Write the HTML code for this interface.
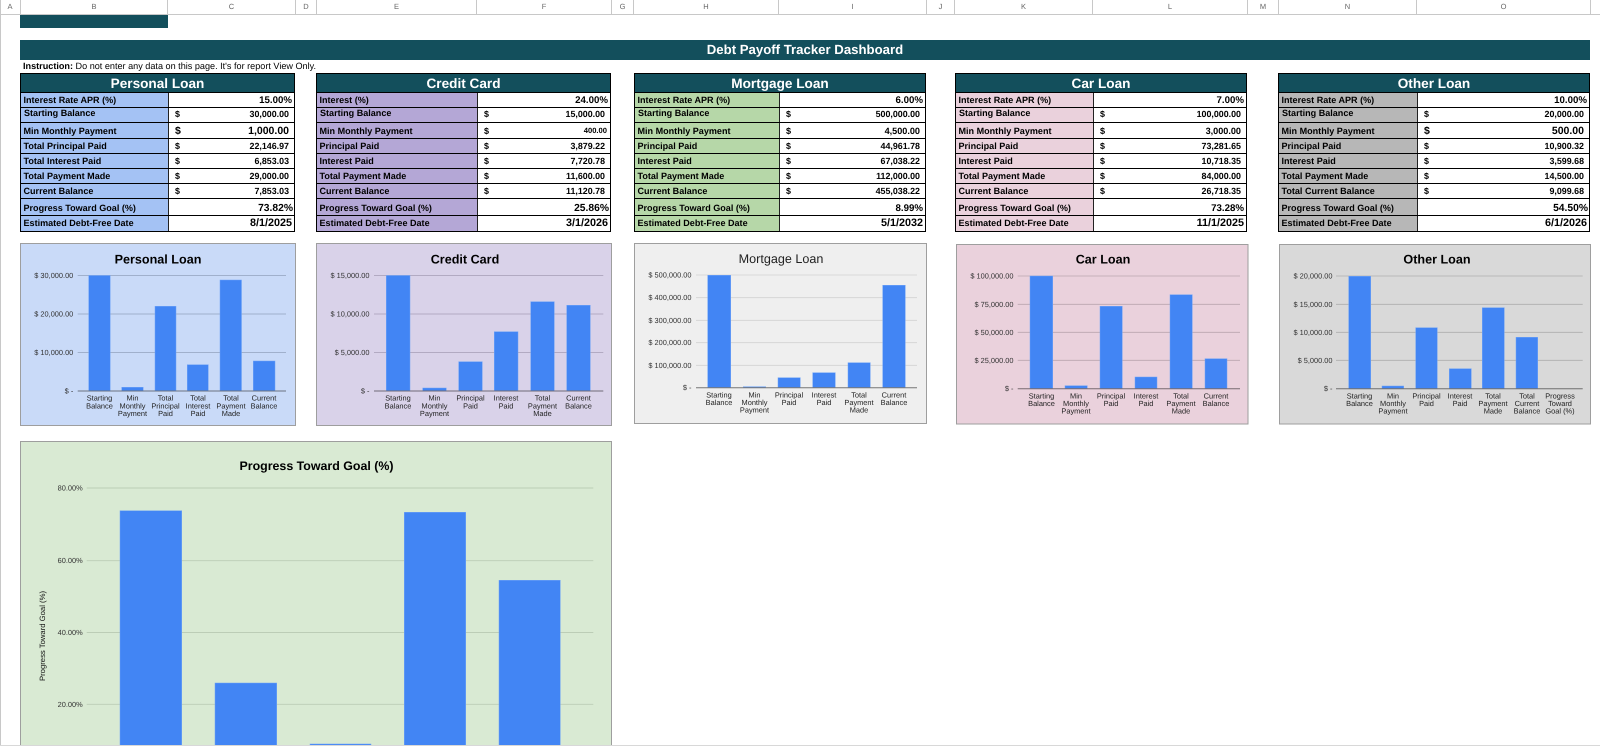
<!DOCTYPE html>
<html><head><meta charset="utf-8"><title>Debt Payoff Tracker Dashboard</title>
<style>
html,body{margin:0;padding:0;background:#fff}
body{width:1600px;height:746px;position:relative;overflow:hidden;font-family:"Liberation Sans",Arial,sans-serif;text-rendering:geometricPrecision;color:#000}
.a{position:absolute}
.h{position:absolute;top:0;height:14px;line-height:14px;border-right:1px solid #c8c8c8;box-sizing:border-box;text-align:center;font-size:7.5px;color:#666}
table{position:absolute;top:73px;border-collapse:collapse;table-layout:fixed;font-weight:bold;font-size:9.05px}
td{padding:0;border:1px solid #000;overflow:hidden;white-space:nowrap;line-height:1;box-sizing:border-box}
tr{height:15px}
tr td{padding-top:1px}
tr.t{height:19px}tr.m{height:16px}tr.g{height:17px}tr.d{height:16px}
tr.t td{padding-top:1px}
tr.s td{padding-top:0;padding-bottom:2px}
tr.m td{padding-top:2px}
tr.g td{padding-top:4px}
tr.d td{padding-top:0}
td.t{background:#134f5c;color:#fff;font-size:13.6px;text-align:center}
td.n{padding-left:2.5px;border-right:1px solid #222}
tr.s td.n{padding-left:3px}
td.v{text-align:right;padding-right:5px;font-size:8.9px}
td.v b{float:left;margin-left:6px}
td.p{text-align:right;padding-right:2px;font-size:9.7px}
td.q{text-align:right;padding-right:1px;font-size:10.3px}
td.e{text-align:right;padding-right:2px;font-size:10.8px}
td.L{font-size:10.5px}td.L b{font-size:10.5px}
td.X{font-size:7.6px;padding-right:3px}td.X b{font-size:9px}
td.M{font-size:9.1px}
.c1 td.n{background:#a4c2f4}.c2 td.n{background:#b4a7d6}.c3 td.n{background:#b6d7a8}.c4 td.n{background:#ead1dc}.c5 td.n{background:#b7b7b7}
svg text{font-family:"Liberation Sans",Arial,sans-serif}
.y{font-size:7.4px;fill:#333;text-anchor:end}
.x{font-size:7.4px;fill:#222;text-anchor:middle}
.ti{font-size:12.6px;font-weight:bold;fill:#000;text-anchor:middle}
.b{fill:#4285f4;stroke:#6fa3f7;stroke-width:.5}
</style></head><body>

<div class="a" style="left:0;top:0;width:1px;height:746px;background:#c8c8c8"></div>
<div class="a" style="left:0;top:14px;width:1600px;height:1px;background:#c8c8c8"></div>
<div class="h" style="left:0;width:21px">A</div>
<div class="h" style="left:21px;width:147px">B</div>
<div class="h" style="left:168px;width:128px">C</div>
<div class="h" style="left:296px;width:21px">D</div>
<div class="h" style="left:317px;width:160px">E</div>
<div class="h" style="left:477px;width:135px">F</div>
<div class="h" style="left:612px;width:22px">G</div>
<div class="h" style="left:634px;width:145px">H</div>
<div class="h" style="left:779px;width:148px">I</div>
<div class="h" style="left:927px;width:28px">J</div>
<div class="h" style="left:955px;width:138px">K</div>
<div class="h" style="left:1093px;width:155px">L</div>
<div class="h" style="left:1248px;width:31px">M</div>
<div class="h" style="left:1279px;width:138px">N</div>
<div class="h" style="left:1417px;width:174px">O</div>

<div class="a" style="left:20px;top:15px;width:148px;height:13px;background:#134f5c"></div>
<div class="a" style="left:20px;top:40px;width:1570px;height:20px;line-height:20px;background:#134f5c;color:#fff;font-weight:bold;font-size:13.2px;text-align:center">Debt Payoff Tracker Dashboard</div>
<div class="a" style="left:23px;top:60px;height:13px;line-height:13px;font-size:9.1px;white-space:nowrap"><b>Instruction:</b> Do not enter any data on this page. It's for report View Only.</div>

<table class="c1" style="left:20px;width:275px"><colgroup><col style="width:148px"><col></colgroup>
<tr class="t"><td class="t" colspan="2">Personal Loan</td></tr>
<tr><td class="n">Interest Rate APR (%)</td><td class="p">15.00%</td></tr>
<tr class="s"><td class="n">Starting Balance</td><td class="v"><b>$</b>30,000.00</td></tr>
<tr class="m"><td class="n">Min Monthly Payment</td><td class="v L"><b>$</b>1,000.00</td></tr>
<tr><td class="n">Total Principal Paid</td><td class="v"><b>$</b>22,146.97</td></tr>
<tr><td class="n">Total Interest Paid</td><td class="v"><b>$</b>6,853.03</td></tr>
<tr><td class="n">Total Payment Made</td><td class="v"><b>$</b>29,000.00</td></tr>
<tr><td class="n">Current Balance</td><td class="v"><b>$</b>7,853.03</td></tr>
<tr class="g"><td class="n">Progress Toward Goal (%)</td><td class="q">73.82%</td></tr>
<tr class="d"><td class="n">Estimated Debt-Free Date</td><td class="e">8/1/2025</td></tr>
</table>

<table class="c2" style="left:316px;width:295px"><colgroup><col style="width:161px"><col></colgroup>
<tr class="t"><td class="t" colspan="2">Credit Card</td></tr>
<tr><td class="n">Interest (%)</td><td class="p">24.00%</td></tr>
<tr class="s"><td class="n">Starting Balance</td><td class="v"><b>$</b>15,000.00</td></tr>
<tr class="m"><td class="n">Min Monthly Payment</td><td class="v X"><b>$</b>400.00</td></tr>
<tr><td class="n">Principal Paid</td><td class="v"><b>$</b>3,879.22</td></tr>
<tr><td class="n">Interest Paid</td><td class="v"><b>$</b>7,720.78</td></tr>
<tr><td class="n">Total Payment Made</td><td class="v"><b>$</b>11,600.00</td></tr>
<tr><td class="n">Current Balance</td><td class="v"><b>$</b>11,120.78</td></tr>
<tr class="g"><td class="n">Progress Toward Goal (%)</td><td class="q">25.86%</td></tr>
<tr class="d"><td class="n">Estimated Debt-Free Date</td><td class="e">3/1/2026</td></tr>
</table>

<table class="c3" style="left:634px;width:292px"><colgroup><col style="width:145px"><col></colgroup>
<tr class="t"><td class="t" colspan="2">Mortgage Loan</td></tr>
<tr><td class="n">Interest Rate APR (%)</td><td class="p">6.00%</td></tr>
<tr class="s"><td class="n">Starting Balance</td><td class="v"><b>$</b>500,000.00</td></tr>
<tr class="m"><td class="n">Min Monthly Payment</td><td class="v M"><b>$</b>4,500.00</td></tr>
<tr><td class="n">Principal Paid</td><td class="v"><b>$</b>44,961.78</td></tr>
<tr><td class="n">Interest Paid</td><td class="v"><b>$</b>67,038.22</td></tr>
<tr><td class="n">Total Payment Made</td><td class="v"><b>$</b>112,000.00</td></tr>
<tr><td class="n">Current Balance</td><td class="v"><b>$</b>455,038.22</td></tr>
<tr class="g"><td class="n">Progress Toward Goal (%)</td><td class="p">8.99%</td></tr>
<tr class="d"><td class="n">Estimated Debt-Free Date</td><td class="e">5/1/2032</td></tr>
</table>

<table class="c4" style="left:955px;width:292px"><colgroup><col style="width:138px"><col></colgroup>
<tr class="t"><td class="t" colspan="2">Car Loan</td></tr>
<tr><td class="n">Interest Rate APR (%)</td><td class="p">7.00%</td></tr>
<tr class="s"><td class="n">Starting Balance</td><td class="v"><b>$</b>100,000.00</td></tr>
<tr class="m"><td class="n">Min Monthly Payment</td><td class="v M"><b>$</b>3,000.00</td></tr>
<tr><td class="n">Principal Paid</td><td class="v"><b>$</b>73,281.65</td></tr>
<tr><td class="n">Interest Paid</td><td class="v"><b>$</b>10,718.35</td></tr>
<tr><td class="n">Total Payment Made</td><td class="v"><b>$</b>84,000.00</td></tr>
<tr><td class="n">Current Balance</td><td class="v"><b>$</b>26,718.35</td></tr>
<tr class="g"><td class="n">Progress Toward Goal (%)</td><td class="p">73.28%</td></tr>
<tr class="d"><td class="n">Estimated Debt-Free Date</td><td class="e">11/1/2025</td></tr>
</table>

<table class="c5" style="left:1278px;width:312px"><colgroup><col style="width:139px"><col></colgroup>
<tr class="t"><td class="t" colspan="2">Other Loan</td></tr>
<tr><td class="n">Interest Rate APR (%)</td><td class="p">10.00%</td></tr>
<tr class="s"><td class="n">Starting Balance</td><td class="v"><b>$</b>20,000.00</td></tr>
<tr class="m"><td class="n">Min Monthly Payment</td><td class="v L"><b>$</b>500.00</td></tr>
<tr><td class="n">Principal Paid</td><td class="v"><b>$</b>10,900.32</td></tr>
<tr><td class="n">Interest Paid</td><td class="v"><b>$</b>3,599.68</td></tr>
<tr><td class="n">Total Payment Made</td><td class="v"><b>$</b>14,500.00</td></tr>
<tr><td class="n">Total Current Balance</td><td class="v"><b>$</b>9,099.68</td></tr>
<tr class="g"><td class="n">Progress Toward Goal (%)</td><td class="q">54.50%</td></tr>
<tr class="d"><td class="n">Estimated Debt-Free Date</td><td class="e">6/1/2026</td></tr>
</table>

<svg class="a" style="left:0;top:0" width="1600" height="746" viewBox="0 0 1600 746">
<!-- Personal -->
<g>
<rect x="20.5" y="243.5" width="275" height="182" fill="#c9daf8" stroke="#9e9e9e"/>
<text class="ti" x="158" y="263.7">Personal Loan</text>
<g stroke="#93a3bd" stroke-width=".8"><path d="M77.7 275.5H286M77.7 314H286M77.7 352.5H286"/></g>
<text class="y" x="73.3" y="278">$ 30,000.00</text><text class="y" x="73.3" y="316.5">$ 20,000.00</text><text class="y" x="73.3" y="355">$ 10,000.00</text><text class="y" x="73.3" y="393.5">$ -</text>
<rect class="b" x="88.7" y="275.5" width="21.5" height="115.5"/><rect class="b" x="121.7" y="387.3" width="21.5" height="3.7"/><rect class="b" x="155" y="306.3" width="21" height="84.7"/><rect class="b" x="187.3" y="364.7" width="21" height="26.3"/><rect class="b" x="220" y="280" width="21.5" height="111"/><rect class="b" x="253.3" y="361" width="21.7" height="30"/>
<path d="M77.7 391H286" stroke="#6a7280" stroke-width="1"/>
<text class="x"><tspan x="99.5" y="400.5">Starting</tspan><tspan x="99.5" y="408.3">Balance</tspan></text>
<text class="x"><tspan x="132.5" y="400.5">Min</tspan><tspan x="132.5" y="408.3">Monthly</tspan><tspan x="132.5" y="416">Payment</tspan></text>
<text class="x"><tspan x="165.5" y="400.5">Total</tspan><tspan x="165.5" y="408.3">Principal</tspan><tspan x="165.5" y="416">Paid</tspan></text>
<text class="x"><tspan x="198" y="400.5">Total</tspan><tspan x="198" y="408.3">Interest</tspan><tspan x="198" y="416">Paid</tspan></text>
<text class="x"><tspan x="231" y="400.5">Total</tspan><tspan x="231" y="408.3">Payment</tspan><tspan x="231" y="416">Made</tspan></text>
<text class="x"><tspan x="264" y="400.5">Current</tspan><tspan x="264" y="408.3">Balance</tspan></text>
</g>
<!-- Credit -->
<g>
<rect x="316.5" y="243.5" width="295" height="182" fill="#d9d2e9" stroke="#9e9e9e"/>
<text class="ti" x="465" y="263.7">Credit Card</text>
<g stroke="#a59db5" stroke-width=".8"><path d="M374 275.5H603.3M374 314H603.3M374 352.5H603.3"/></g>
<text class="y" x="369.5" y="278">$ 15,000.00</text><text class="y" x="369.5" y="316.5">$ 10,000.00</text><text class="y" x="369.5" y="355">$ 5,000.00</text><text class="y" x="369.5" y="393.5">$ -</text>
<rect class="b" x="386.3" y="275.5" width="23.7" height="115.5"/><rect class="b" x="422.7" y="388" width="23.6" height="3"/><rect class="b" x="458.7" y="361.7" width="23.6" height="29.3"/><rect class="b" x="494.3" y="331.7" width="23.7" height="59.3"/><rect class="b" x="530.7" y="301.7" width="23.6" height="89.3"/><rect class="b" x="566.7" y="305.3" width="23.6" height="85.7"/>
<path d="M374 391H603.3" stroke="#6f6a78" stroke-width="1"/>
<text class="x"><tspan x="398" y="400.5">Starting</tspan><tspan x="398" y="408.3">Balance</tspan></text>
<text class="x"><tspan x="434.5" y="400.5">Min</tspan><tspan x="434.5" y="408.3">Monthly</tspan><tspan x="434.5" y="416">Payment</tspan></text>
<text class="x"><tspan x="470.5" y="400.5">Principal</tspan><tspan x="470.5" y="408.3">Paid</tspan></text>
<text class="x"><tspan x="506" y="400.5">Interest</tspan><tspan x="506" y="408.3">Paid</tspan></text>
<text class="x"><tspan x="542.5" y="400.5">Total</tspan><tspan x="542.5" y="408.3">Payment</tspan><tspan x="542.5" y="416">Made</tspan></text>
<text class="x"><tspan x="578.5" y="400.5">Current</tspan><tspan x="578.5" y="408.3">Balance</tspan></text>
</g>
<!-- Mortgage -->
<g>
<rect x="634.5" y="243.5" width="292" height="180" fill="#efefef" stroke="#9e9e9e"/>
<text x="781" y="263" text-anchor="middle" font-size="12.6" fill="#222">Mortgage Loan</text>
<g stroke="#d2d2d2" stroke-width=".8"><path d="M696 275H917M696 297.7H917M696 320.3H917M696 342.7H917M696 365.3H917"/></g>
<text class="y" x="691.5" y="277.5">$ 500,000.00</text><text class="y" x="691.5" y="300.2">$ 400,000.00</text><text class="y" x="691.5" y="322.8">$ 300,000.00</text><text class="y" x="691.5" y="345.2">$ 200,000.00</text><text class="y" x="691.5" y="367.8">$ 100,000.00</text><text class="y" x="691.5" y="390.2">$ -</text>
<rect class="b" x="707.7" y="275.3" width="23" height="112.4"/><rect class="b" x="743.3" y="386.7" width="22.4" height="1"/><rect class="b" x="778" y="377.7" width="22.3" height="10"/><rect class="b" x="812.7" y="372.7" width="22.6" height="15"/><rect class="b" x="848" y="362.7" width="22.3" height="25"/><rect class="b" x="882.7" y="285.3" width="22.6" height="102.4"/>
<path d="M696 387.7H917" stroke="#777" stroke-width="1"/>
<text class="x"><tspan x="719" y="397.5">Starting</tspan><tspan x="719" y="405">Balance</tspan></text>
<text class="x"><tspan x="754.5" y="397.5">Min</tspan><tspan x="754.5" y="405">Monthly</tspan><tspan x="754.5" y="412.5">Payment</tspan></text>
<text class="x"><tspan x="789" y="397.5">Principal</tspan><tspan x="789" y="405">Paid</tspan></text>
<text class="x"><tspan x="824" y="397.5">Interest</tspan><tspan x="824" y="405">Paid</tspan></text>
<text class="x"><tspan x="859" y="397.5">Total</tspan><tspan x="859" y="405">Payment</tspan><tspan x="859" y="412.5">Made</tspan></text>
<text class="x"><tspan x="894" y="397.5">Current</tspan><tspan x="894" y="405">Balance</tspan></text>
</g>
<!-- Car -->
<g>
<rect x="956.5" y="244.5" width="291.5" height="179.5" fill="#ead1dc" stroke="#9e9e9e"/>
<text class="ti" x="1103" y="263.5">Car Loan</text>
<g stroke="#b9a6af" stroke-width=".8"><path d="M1017.7 276H1240M1017.7 304.3H1240M1017.7 332.3H1240M1017.7 360.3H1240"/></g>
<text class="y" x="1013.5" y="278.5">$ 100,000.00</text><text class="y" x="1013.5" y="306.8">$ 75,000.00</text><text class="y" x="1013.5" y="334.8">$ 50,000.00</text><text class="y" x="1013.5" y="362.8">$ 25,000.00</text><text class="y" x="1013.5" y="391.2">$ -</text>
<rect class="b" x="1030" y="276" width="22.7" height="112.7"/><rect class="b" x="1065" y="385.7" width="22.3" height="3"/><rect class="b" x="1100" y="306.3" width="22.3" height="82.4"/><rect class="b" x="1135" y="377" width="22" height="11.7"/><rect class="b" x="1170" y="294.7" width="22.3" height="94"/><rect class="b" x="1205" y="358.7" width="22" height="30"/>
<path d="M1017.7 388.7H1240" stroke="#776a70" stroke-width="1"/>
<text class="x"><tspan x="1041.5" y="398.7">Starting</tspan><tspan x="1041.5" y="406">Balance</tspan></text>
<text class="x"><tspan x="1076" y="398.7">Min</tspan><tspan x="1076" y="406">Monthly</tspan><tspan x="1076" y="413.5">Payment</tspan></text>
<text class="x"><tspan x="1111" y="398.7">Principal</tspan><tspan x="1111" y="406">Paid</tspan></text>
<text class="x"><tspan x="1146" y="398.7">Interest</tspan><tspan x="1146" y="406">Paid</tspan></text>
<text class="x"><tspan x="1181" y="398.7">Total</tspan><tspan x="1181" y="406">Payment</tspan><tspan x="1181" y="413.5">Made</tspan></text>
<text class="x"><tspan x="1216" y="398.7">Current</tspan><tspan x="1216" y="406">Balance</tspan></text>
</g>
<!-- Other -->
<g>
<rect x="1279.5" y="244.5" width="311" height="179.5" fill="#d9d9d9" stroke="#9e9e9e"/>
<text class="ti" x="1437" y="263.5">Other Loan</text>
<g stroke="#aeaeae" stroke-width=".8"><path d="M1336 276H1582.7M1336 304.3H1582.7M1336 332.3H1582.7M1336 360.3H1582.7"/></g>
<text class="y" x="1332.5" y="278.5">$ 20,000.00</text><text class="y" x="1332.5" y="306.8">$ 15,000.00</text><text class="y" x="1332.5" y="334.8">$ 10,000.00</text><text class="y" x="1332.5" y="362.8">$ 5,000.00</text><text class="y" x="1332.5" y="391.2">$ -</text>
<rect class="b" x="1348.7" y="276.3" width="22" height="112.4"/><rect class="b" x="1382" y="386" width="21.7" height="2.7"/><rect class="b" x="1415.7" y="327.7" width="21.6" height="61"/><rect class="b" x="1449.3" y="368.7" width="22" height="20"/><rect class="b" x="1482.3" y="307.7" width="22" height="81"/><rect class="b" x="1516" y="337.3" width="21.7" height="51.4"/>
<path d="M1336 388.7H1582.7" stroke="#707070" stroke-width="1"/>
<text class="x"><tspan x="1359.5" y="398.7">Starting</tspan><tspan x="1359.5" y="406">Balance</tspan></text>
<text class="x"><tspan x="1393" y="398.7">Min</tspan><tspan x="1393" y="406">Monthly</tspan><tspan x="1393" y="413.5">Payment</tspan></text>
<text class="x"><tspan x="1426.5" y="398.7">Principal</tspan><tspan x="1426.5" y="406">Paid</tspan></text>
<text class="x"><tspan x="1460" y="398.7">Interest</tspan><tspan x="1460" y="406">Paid</tspan></text>
<text class="x"><tspan x="1493" y="398.7">Total</tspan><tspan x="1493" y="406">Payment</tspan><tspan x="1493" y="413.5">Made</tspan></text>
<text class="x"><tspan x="1527" y="398.7">Total</tspan><tspan x="1527" y="406">Current</tspan><tspan x="1527" y="413.5">Balance</tspan></text>
<text class="x"><tspan x="1560" y="398.7">Progress</tspan><tspan x="1560" y="406">Toward</tspan><tspan x="1560" y="413.5">Goal (%)</tspan></text>
</g>
<!-- Progress -->
<g>
<rect x="20.5" y="441.5" width="591" height="310" fill="#d9ead3" stroke="#9e9e9e"/>
<text class="ti" x="316.5" y="470" style="font-size:12.4px">Progress Toward Goal (%)</text>
<g stroke="#bccdb6" stroke-width=".9"><path d="M86.7 488H593.3M86.7 560.7H593.3M86.7 632.5H593.3M86.7 704.3H593.3"/></g>
<text class="y" x="82.7" y="490.6">80.00%</text><text class="y" x="82.7" y="563.2">60.00%</text><text class="y" x="82.7" y="635">40.00%</text><text class="y" x="82.7" y="706.9">20.00%</text>
<text transform="translate(45 636) rotate(-90)" text-anchor="middle" font-size="7.7" fill="#111">Progress Toward Goal (%)</text>
<rect class="b" x="120" y="510.7" width="61.7" height="240"/><rect class="b" x="215" y="683" width="61.7" height="70"/><rect class="b" x="310" y="744" width="61" height="8"/><rect class="b" x="404.3" y="512.3" width="61.4" height="240"/><rect class="b" x="499" y="580.3" width="61.3" height="170"/>
</g>
</svg>
<div class="a" style="left:0;top:745px;width:1600px;height:1px;background:#d8d8d8"></div>
</body></html>
